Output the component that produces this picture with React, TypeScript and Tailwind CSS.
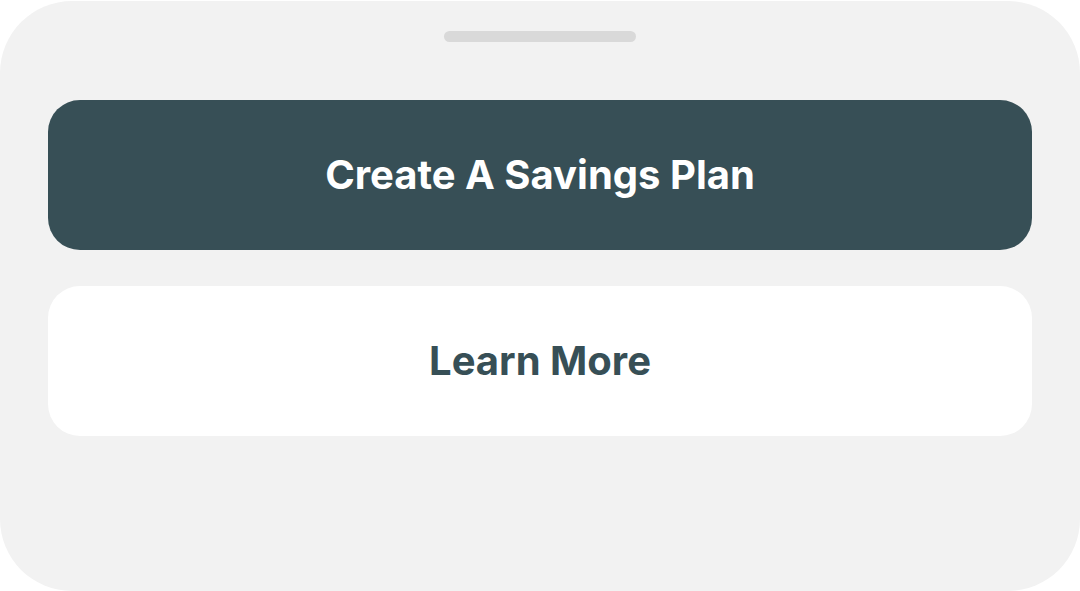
import React from "react";

export default function App() {
  return (
    <div className="w-[1080px] h-[591px] bg-white pt-[1px]" style={{ fontFamily: "Inter, 'Noto Sans', sans-serif" }}>
      <div className="h-[590px] w-full rounded-[72px] bg-[#f2f2f2] flex flex-col items-center px-[48px]">
        <div className="mt-[30px] h-[11px] w-[192px] rounded-full bg-[#d9d9d9]" />
        <button className="mt-[58px] h-[150px] w-full rounded-[32px] bg-[#374f56] text-white text-[40px] font-bold flex items-center justify-center">
          Create A Savings Plan
        </button>
        <button className="mt-[36px] h-[150px] w-full rounded-[32px] bg-white text-[#374f56] text-[40px] font-bold flex items-center justify-center">
          Learn More
        </button>
      </div>
    </div>
  );
}
